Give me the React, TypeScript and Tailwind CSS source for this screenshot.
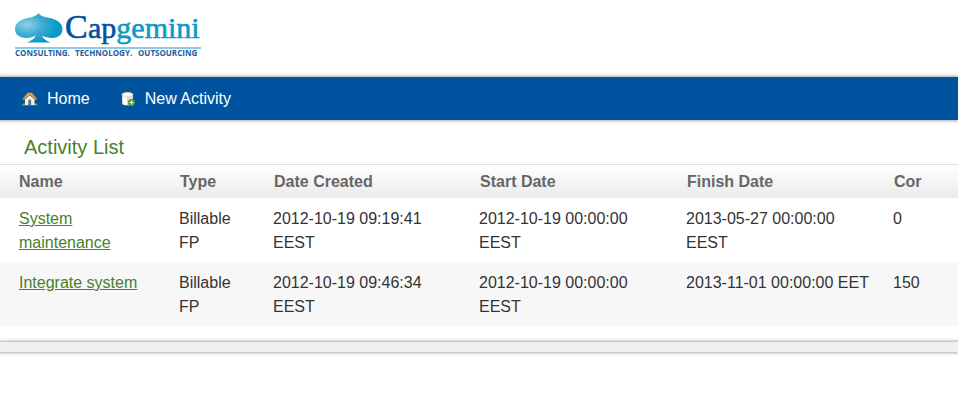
import React from "react";

const activities = [
  {
    name: "System maintenance",
    type: "Billable FP",
    created: "2012-10-19 09:19:41 EEST",
    start: "2012-10-19 00:00:00 EEST",
    finish: "2013-05-27 00:00:00 EEST",
    cor: "0",
  },
  {
    name: "Integrate system",
    type: "Billable FP",
    created: "2012-10-19 09:46:34 EEST",
    start: "2012-10-19 00:00:00 EEST",
    finish: "2013-11-01 00:00:00 EET",
    cor: "150",
  },
];

const Logo = () => (
  <svg width="200" height="60" viewBox="14 4 200 60" role="img" aria-label="Capgemini">
    <defs>
      <radialGradient id="spade" cx="0.25" cy="0.4" r="0.65">
        <stop offset="0" stopColor="#8fd0e6" />
        <stop offset="0.5" stopColor="#3fadd2" />
        <stop offset="1" stopColor="#0a98c8" />
      </radialGradient>
    </defs>
    <path
      fill="url(#spade)"
      d="M38.500 13C39.500 15 42 16.500 46 17.200C54 18.500 62.500 21.500 62.500 29C62.500 34.500 58.500 38 52.500 38C47.500 38 44.500 37 42 35.500C43 38.500 46 41 51 42.500H26.500C31.500 41 34.500 38.500 35.500 35.500C33 37 30.500 38 26.500 38C19.500 38 15 34.500 15 29C15 22 22 19 29 17.700C33.500 16.800 37 15.500 38.500 13Z"
    />
    <text y="38" fontFamily="'Liberation Serif', serif" fontSize="30" strokeWidth="0.6">
      <tspan x="65" fontSize="34" fill="#00539f" stroke="#00539f">C</tspan>
      <tspan x="88" fill="#00539f" stroke="#00539f">ap</tspan>
      <tspan fill="#0a9ac9" stroke="#0a9ac9">gemini</tspan>
    </text>
    <rect x="15" y="47" width="186" height="2" fill="#8ccbe2" />
    <text y="56" fontFamily="'Open Sans', sans-serif" fontSize="8" fontWeight="700" fill="#1d5c9e">
      <tspan x="15">CONSULTING.</tspan>
      <tspan x="75">TECHNOLOGY.</tspan>
      <tspan x="138">OUTSOURCING</tspan>
    </text>
  </svg>
);

const HouseIcon = () => (
  <svg width="16" height="16" viewBox="0 0 16 16" aria-hidden="true">
    <path d="M0 13.500Q2 11.500 4 13H12Q14 11.500 15.500 13.500V14.500H0Z" fill="#5fae3c" />
    <path d="M3 8L7.700 4L12.500 8V14H3Z" fill="#f4f4f4" />
    <path d="M6.200 14V9.500Q6.200 8.500 7.700 8.500Q9.200 8.500 9.200 9.500V14Z" fill="#6f7378" />
    <path d="M5.500 1.500H10L15.300 8L14 9.500L7.800 4.500L1.700 9.500L0.300 8Z" fill="#a8713a" />
    <path d="M6 2.200H9.600L14.300 7.800L13.800 8.300L7.800 3.300L1.800 8.300L1.300 7.800Z" fill="#e0ab69" />
  </svg>
);

const DatabaseAddIcon = () => (
  <svg width="16" height="16" viewBox="0 0 16 16" aria-hidden="true">
    <path d="M2 3V12.500C2 15 13 15 13 12.500V3Z" fill="#d9d9d9" />
    <path d="M3 4V12.500C3.500 13.500 5 14 7 14V5Z" fill="#fafafa" />
    <ellipse cx="7.500" cy="3.500" rx="5.500" ry="2.200" fill="#f7f7f7" stroke="#c4c4c4" strokeWidth="0.5" />
    <circle cx="11.500" cy="11.500" r="3.500" fill="#4f9a35" />
    <path d="M11 9.500H12V11H13.500V12H12V13.500H11V12H9.500V11H11Z" fill="#fff" />
  </svg>
);

const App = () => {
  return (
    <div className="bg-white pb-14 font-['Liberation_Sans',Arial,sans-serif] text-base text-[#333333]">
      <header className="h-[77px] pt-1 pl-[14px]">
        <a href="#" className="inline-block">
          <Logo />
        </a>
      </header>

      <nav className="bg-[#00539f] shadow-[0_0_3px_1px_#aaaaaa]">
        <ul className="flex gap-[30px] px-[22px] pt-[10px] pb-[9px] text-white">
          <li>
            <a href="#" className="flex items-center gap-[9px]">
              <HouseIcon />
              Home
            </a>
          </li>
          <li>
            <a href="#" className="flex items-center gap-[9px]">
              <DatabaseAddIcon />
              New Activity
            </a>
          </li>
        </ul>
      </nav>

      <main>
        <h1 className="px-6 pt-[14px] pb-[3px] text-xl leading-[27px] text-[#48802c]">
          Activity List
        </h1>

        <table className="w-full table-fixed border-t border-[#dfdfdf] text-left">
          <colgroup>
            <col className="w-[171px]" />
            <col className="w-[94px]" />
            <col className="w-[206px]" />
            <col className="w-[207px]" />
            <col className="w-[207px]" />
            <col className="w-[73px]" />
          </colgroup>
          <thead className="bg-linear-to-b from-white to-[#eaeaea] text-[#666666]">
            <tr>
              <th className="pt-[5px] pb-1 pr-3 pl-[19px]">Name</th>
              <th className="pt-[5px] pb-1 pr-3 pl-[9px]">Type</th>
              <th className="pt-[5px] pb-1 pr-3 pl-[9px]">Date Created</th>
              <th className="pt-[5px] pb-1 pr-3 pl-[9px]">Start Date</th>
              <th className="pt-[5px] pb-1 pr-3 pl-[9px]">Finish Date</th>
              <th className="pt-[5px] pb-1 pr-3 pl-[9px]">Cor</th>
            </tr>
          </thead>
          <tbody>
            {activities.map((activity) => (
              <tr key={activity.name} className="align-top even:bg-[#f7f7f7]">
                <td className="pt-[9px] pb-[7px] pr-3 pl-[19px]">
                  <a href="#" className="text-[#48802c] underline">
                    {activity.name}
                  </a>
                </td>
                <td className="pt-[9px] pb-[7px] pr-3 pl-2">{activity.type}</td>
                <td className="pt-[9px] pb-[7px] pr-3 pl-2">{activity.created}</td>
                <td className="pt-[9px] pb-[7px] pr-3 pl-2">{activity.start}</td>
                <td className="pt-[9px] pb-[7px] pr-3 pl-2">{activity.finish}</td>
                <td className="pt-[9px] pb-[7px] pr-3 pl-2">{activity.cor}</td>
              </tr>
            ))}
          </tbody>
        </table>
      </main>

      <footer className="mt-4 h-[10px] bg-[#efefef] shadow-[0_0_3px_1px_#aaaaaa]" />
    </div>
  );
};

export default App;
